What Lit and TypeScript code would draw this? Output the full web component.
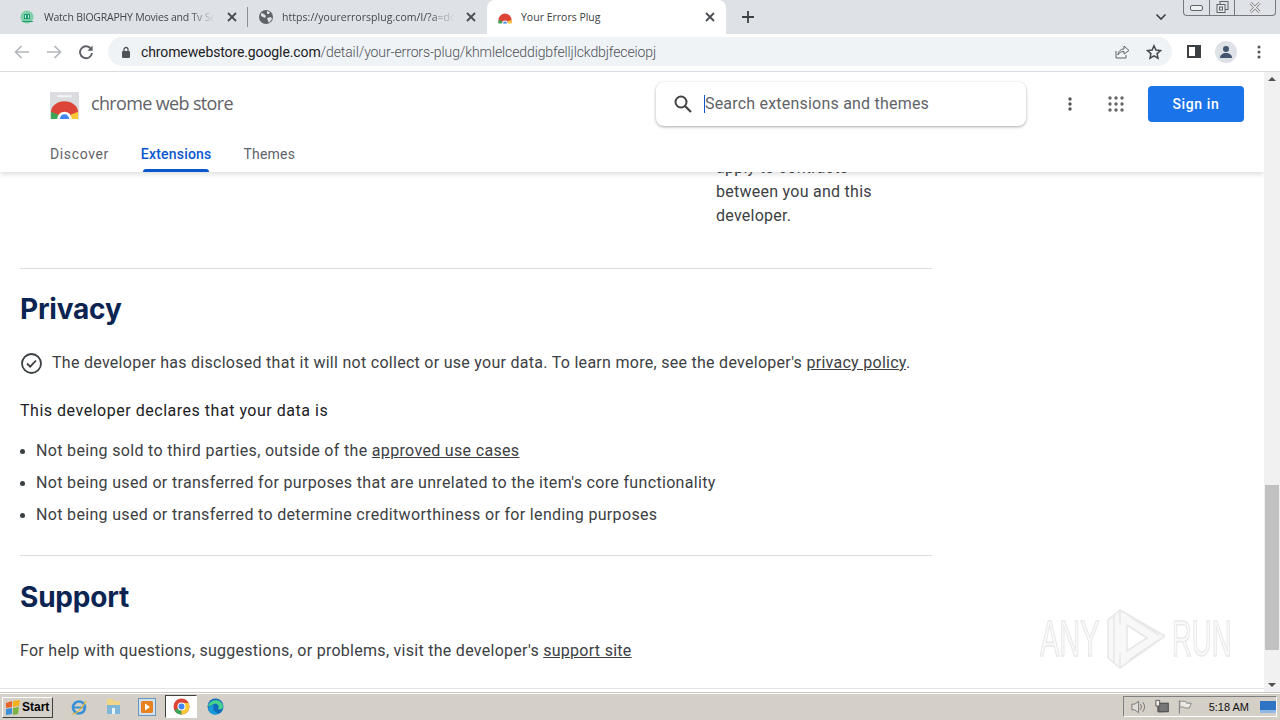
import { LitElement, html, css, svg } from "lit";
import { customElement } from "lit/decorators.js";

const closeIcon = html`<svg class="x" width="10" height="10" viewBox="0 0 10 10"><path d="M1 1l8 8M9 1l-8 8" stroke="#4a4d52" stroke-width="1.8" fill="none"/></svg>`;
const rainbow = (s: number) => html`<svg width="${s}" height="${s}" viewBox="0 0 28 28">
  <path d="M1 26v-6a13 13 0 0 1 26 0v6z" fill="#db4437"/>
  <path d="M1 20v7h7v-5z" fill="#3aa757"/><path d="M27 20v7h-7v-5z" fill="#fcc934"/>
  <path d="M8 27a6 6 0 0 1 12 0z" fill="#fff"/><path d="M10 27a4 4 0 0 1 8 0z" fill="#4285f4"/></svg>`;

@customElement("app-root")
export class AppRoot extends LitElement {
  static styles = css`
    :host { display: flex; flex-direction: column; width: 1280px; height: 720px; overflow: hidden; background: #fff; font-family: Roboto, sans-serif; color: #3c4043; }
    a { color: inherit; text-decoration: underline; }

    .tabs { height: 34px; flex: none; background: #dee1e6; display: flex; align-items: center; padding-left: 8px; position: relative; }
    .tab { width: 239px; height: 34px; box-sizing: border-box; display: flex; align-items: center; padding: 0 12px 0 11px; gap: 9px; font: 10.5px "Open Sans", sans-serif; color: #45474b; flex: none; }
    .tab .title { flex: 1; white-space: nowrap; overflow: hidden; margin-right: -5px; letter-spacing: -.22px; -webkit-mask-image: linear-gradient(90deg, #000 84%, transparent 98%); mask-image: linear-gradient(90deg, #000 84%, transparent 98%); }
    .tab .x { margin-left: 5px; }
    .tab.sep { border-right: 1px solid #8b8e93; height: 20px; width: 240px; padding: 0 10px 0 11px; }
    .tab.t2 { padding-left: 10px; padding-right: 11px; gap: 8px; }
    .tab.t2 .title { letter-spacing: .05px; }
    .tab.active { background: #fff; border-radius: 8px 8px 0 0; padding: 0 11px 0 11px; color: #3c4043; }
    .tab.active .title { -webkit-mask-image: none; mask-image: none; letter-spacing: 0; }
    .plus { margin-left: 14px; width: 16px; height: 16px; }
    .chev { margin-left: auto; margin-right: 113px; }
    .winctl { position: absolute; right: 4px; top: 0; width: 93px; height: 16px; box-sizing: border-box; border: 1px solid #75787c; border-top: none; border-radius: 0 0 4px 4px; display: flex; background: #dfe2e7; }
    .winctl > div { display: flex; align-items: center; justify-content: center; border-right: 1px solid #75787c; }
    .winctl > div:nth-child(1) { width: 25px; } .winctl > div:nth-child(2) { width: 24px; } .winctl > div:nth-child(3) { flex: 1; border: none; }

    .toolbar { height: 38px; flex: none; box-sizing: border-box; border-bottom: 1px solid #d9dbde; display: flex; align-items: center; padding: 0 0 2px 13px; background: #fff; }
    .nav { display: flex; gap: 14px; align-items: center; margin-right: 14px; }
    .reload { margin-left: 1px; }
    .omni { width: 1064px; height: 29px; border-radius: 15px; background: #f0f3f6; display: flex; align-items: center; padding-left: 13px; box-sizing: border-box; }
    .url { margin-left: 10px; font: 300 14px Roboto, sans-serif; color: #4d5157; white-space: nowrap; letter-spacing: -.11px; }
    .url b { font-weight: 400; color: #202124; }
    .omni-end { margin-left: auto; display: flex; gap: 16px; padding-right: 10px; align-items: center; }
    .tb-right { display: flex; align-items: center; margin-left: 15px; gap: 14px; }
    .avatar { width: 22px; height: 22px; border-radius: 50%; background: #dee1e6; display: flex; align-items: center; justify-content: center; overflow: hidden; }
    .dots { margin-left: 6px; }

    .view { flex: 1; display: flex; min-height: 0; }
    .page { flex: 1; position: relative; overflow: hidden; background: #fff; }
    .content { padding: 84px 0 0 20px; width: 912px; font-size: 16px; line-height: 24px; color: #3c4043; letter-spacing: .33px; }
    .side { margin-left: 696px; width: 190px; margin-bottom: 40px; letter-spacing: .26px; }
    hr { border: none; border-top: 1px solid #dadce0; margin: 0; }
    h2 { margin: 0; font: 700 28px/36px Inter, sans-serif; color: #0b2452; letter-spacing: -.2px; }
    .privacy h2 { padding-top: 22px; }
    .check { display: flex; align-items: center; gap: 9px; margin-top: 24px; white-space: nowrap; letter-spacing: .28px; }
    .declares { margin: 24px 0 0; color: #202124; letter-spacing: .52px; }
    ul { list-style: none; margin: 12px 0 0; padding: 0 0 0 16px; white-space: nowrap; }
    li { height: 32px; line-height: 32px; position: relative; }
    li::before { content: ""; position: absolute; left: -16px; top: 14px; width: 5px; height: 5px; border-radius: 50%; background: #3c4043; }
    .support { margin-top: 24px; }
    .support h2 { padding-top: 23px; }
    .support p { margin: 24px 0 0; white-space: nowrap; letter-spacing: .28px; }
    .endrule { position: absolute; left: 0; right: 0; bottom: 3px; border-top: 1px solid #e3e3e3; }

    .hdr { position: absolute; left: 0; top: 0; right: 0; height: 100px; background: #fff; box-shadow: 0 2px 5px rgba(60,64,67,.18); }
    .hdr-top { display: flex; align-items: center; height: 64px; padding: 0 20px 0 50px; }
    .logo { margin-top: 2px; }
    .brand { margin: 0 0 2px 12px; font: 400 18px "Open Sans", sans-serif; color: #5f6368; letter-spacing: -.65px; }
    .search { margin-left: 423px; width: 370px; height: 44px; border-radius: 8px; background: #fff; box-shadow: 0 1px 3px rgba(60,64,67,.45); display: flex; align-items: center; padding-left: 17px; box-sizing: border-box; }
    .caret { width: 1px; height: 18px; background: #0b57d0; margin-left: 11px; }
    .ph { font-size: 16px; color: #5f6368; letter-spacing: .21px; margin-bottom: 1px; }
    .kebab { margin-left: 42px; }
    .apps { margin-left: 36px; }
    .signin { margin-left: 24px; width: 96px; height: 36px; border: none; border-radius: 4px; background: #1a73e8; color: #fff; font: 500 14px Roboto, sans-serif; letter-spacing: .6px; }
    .hdr-nav { display: flex; padding-left: 50px; gap: 32px; font-size: 14px; color: #5f6368; height: 36px; }
    .hdr-nav span { position: relative; line-height: 36px; letter-spacing: .2px; }
    .hdr-nav span:first-child { letter-spacing: .62px; }
    .hdr-nav .on { color: #0b57d0; font-weight: 500; letter-spacing: .2px; }
    .hdr-nav .on::after { content: ""; position: absolute; left: 2px; right: 2px; bottom: 0; height: 3px; border-radius: 3px 3px 0 0; background: #0b57d0; }

    .sb { width: 16px; flex: none; background: #f1f1f1; display: flex; flex-direction: column; align-items: center; justify-content: space-between; position: relative; }
    .thumb { position: absolute; top: 413px; left: 1px; width: 14px; height: 165px; background: #c1c1c1; }
    .arrow { width: 0; height: 0; border-left: 4px solid transparent; border-right: 4px solid transparent; margin: 5px 0; }
    .arrow.up { border-bottom: 4px solid #505050; } .arrow.dn { border-top: 4px solid #505050; }

    .mark { position: absolute; left: 1040px; top: 608px; display: flex; align-items: center; pointer-events: none; font: 400 50px/62px "Liberation Sans", sans-serif; color: #fafafa; -webkit-text-stroke: 1.6px #e9e9e9; filter: blur(.4px); }
    .mark span { display: block; width: 62px; white-space: nowrap; transform-origin: left center; }
    .mark .any { transform: scaleX(.58); }
    .mark .run { transform: scaleX(.55); margin-left: 7px; }
    .mark svg { margin-left: 5px; }

    .taskbar { height: 28px; flex: none; box-sizing: border-box; background: #d4d0c8; border-top: 1px solid #c9c7c1; box-shadow: inset 0 1px 0 #fff; display: flex; align-items: center; padding-left: 2px; }
    .start { width: 51px; height: 21px; box-sizing: border-box; border: 1px solid; border-color: #fff #404040 #404040 #fff; background: #d4d0c8; display: flex; align-items: center; gap: 1px; padding-left: 2px; font: 700 12px "Liberation Sans", sans-serif; color: #000; margin-top: 1px; }
    .ql { display: flex; align-items: center; margin-left: 9px; gap: 0; }
    .ql > div { width: 34px; height: 23px; display: flex; align-items: center; justify-content: center; }
    .ql .cur { background: #fff; box-sizing: border-box; border: 1px solid; border-color: #404040 #fff #fff #404040; width: 32px; margin: 0 1px; }
    .tray { margin-left: auto; margin-right: 3px; width: 154px; height: 21px; box-sizing: border-box; border: 1px solid; border-color: #808080 #fff #fff #808080; display: flex; align-items: center; padding-left: 6px; font: 400 11px "Liberation Sans", sans-serif; color: #111; white-space: nowrap; }
    .net { margin-left: 6px; } .flag { margin-left: 8px; }
    .time { margin-left: 16px; flex: none; }
    .desk { margin-left: 11px; flex: none; }
  `;

  render() {
    return html`
      <div class="tabs">
        <div class="tab sep">
          <svg width="16" height="16" viewBox="0 0 16 16"><circle cx="8" cy="8" r="6.5" fill="#7fd0a8"/><path d="M4 12h9l2 1H2zM5 5h6v5H5z" fill="#1d9a72"/><path d="M6 6h1v3H6zM9 6h1v3H9z" fill="#c9efe0"/></svg>
          <span class="title">Watch BIOGRAPHY Movies and Tv Se</span>${closeIcon}
        </div>
        <div class="tab t2">
          <svg width="16" height="16" viewBox="0 0 16 16"><circle cx="8" cy="8" r="7" fill="#5f6368"/><path d="M3 4l3 1 2 2-1 2-2-1-2-1zM9 2l3 1-1 2-2 0zM9 9l4-1 1 2-3 4-1-2z" fill="#dee1e6"/></svg>
          <span class="title">https://yourerrorsplug.com/l/?a=do</span>${closeIcon}
        </div>
        <div class="tab active">${rainbow(14)}<span class="title">Your Errors Plug</span>${closeIcon}</div>
        <svg class="plus" viewBox="0 0 16 16"><path d="M8 2v12M2 8h12" stroke="#3c4043" stroke-width="1.8"/></svg>
        <svg class="chev" width="12" height="8" viewBox="0 0 12 8"><path d="M1.5 1.5L6 6l4.5-4.5" stroke="#3c4043" stroke-width="1.6" fill="none"/></svg>
        <div class="winctl">
          <div><svg width="13" height="6"><rect x=".5" y=".5" width="12" height="5" rx="1.5" fill="#eef0f2" stroke="#5f6368"/></svg></div>
          <div><svg width="13" height="13" viewBox="0 0 13 13"><rect x="4" y=".5" width="8" height="8" fill="none" stroke="#5f6368"/><rect x="1" y="3.5" width="8" height="8" fill="#e6e8ec" stroke="#5f6368"/><rect x="3.5" y="6" width="3" height="3" fill="none" stroke="#5f6368"/></svg></div>
          <div><svg width="12" height="11" viewBox="0 0 12 11"><path d="M1.5 1l9 9M10.5 1l-9 9" stroke="#777" stroke-width="2.6"/><path d="M1.5 1l9 9M10.5 1l-9 9" stroke="#f3f3f3" stroke-width="1.2"/></svg></div>
        </div>
      </div>

      <div class="toolbar">
        <div class="nav">
          <svg width="18" height="16" viewBox="0 0 18 16"><path d="M16 8H3M8.500 2L2.500 8l6 6" stroke="#b4b7bb" stroke-width="1.7" fill="none"/></svg>
          <svg width="18" height="16" viewBox="0 0 18 16"><path d="M2 8h13M9.500 2l6 6-6 6" stroke="#b4b7bb" stroke-width="1.7" fill="none"/></svg>
          <svg class="reload" width="16" height="16" viewBox="0 0 16 16"><path d="M13.200 5.200A6 6 0 1 0 14 9" stroke="#5f6368" stroke-width="1.9" fill="none"/><path d="M14.600 1.500v5.200H9.400z" fill="#5f6368"/></svg>
        </div>
        <div class="omni">
          <svg width="10" height="12" viewBox="0 0 10 12"><rect x="1" y="5" width="8" height="7" rx="1" fill="#50545a"/><path d="M3 5V3.500a2 2 0 0 1 4 0V5" stroke="#50545a" stroke-width="1.3" fill="none"/></svg>
          <span class="url"><b>chromewebstore.google.com</b>/detail/your-errors-plug/khmlelceddigbfelljlckdbjfeceiopj</span>
          <div class="omni-end">
            <svg width="16" height="16" viewBox="0 0 16 16"><path d="M2 7v7h10v-3" stroke="#5f6368" fill="none"/><path d="M4 11c0-4 3-6 6-6V2l5 4.500L10 10V7.500c-3 0-5 1-6 3.500z" fill="#f0f3f6" stroke="#5f6368"/></svg>
            <svg width="16" height="16" viewBox="0 0 16 16"><path d="M8 1.800l1.900 4.200 4.600.5-3.400 3.100.9 4.600L8 11.900l-4 2.300.9-4.600L1.500 6.500l4.600-.5z" fill="none" stroke="#44474b" stroke-width="1.5"/></svg>
          </div>
        </div>
        <div class="tb-right">
          <svg width="14" height="13" viewBox="0 0 14 13"><rect x="1" y="1" width="12" height="11" fill="#fff" stroke="#3c4043" stroke-width="2"/><rect x="8" y="1" width="5" height="11" fill="#3c4043"/></svg>
          <div class="avatar"><svg width="14" height="14" viewBox="0 0 14 14"><circle cx="7" cy="4" r="3" fill="#44546f"/><path d="M1 13c0-3.500 3-5 6-5s6 1.500 6 5z" fill="#44546f"/></svg></div>
          <svg class="dots" width="4" height="14" viewBox="0 0 4 14"><circle cx="2" cy="2" r="1.500" fill="#50545a"/><circle cx="2" cy="7" r="1.500" fill="#50545a"/><circle cx="2" cy="12" r="1.500" fill="#50545a"/></svg>
        </div>
      </div>

      <div class="view">
        <div class="page">
          <div class="content">
            <div class="side">apply to contracts between you and this developer.</div>
            <hr />
            <section class="privacy">
              <h2>Privacy</h2>
              <div class="check">
                <svg width="23" height="23" viewBox="0 0 23 23"><circle cx="11.500" cy="11.500" r="9.500" fill="none" stroke="#3c4043" stroke-width="1.800"/><path d="M7 11.500l3.200 3.200L16 8.500" fill="none" stroke="#3c4043" stroke-width="1.800"/></svg>
                <span>The developer has disclosed that it will not collect or use your data. To learn more, see the developer's <a>privacy policy</a>.</span>
              </div>
              <p class="declares">This developer declares that your data is</p>
              <ul>
                <li>Not being sold to third parties, outside of the <a>approved use cases</a></li>
                <li>Not being used or transferred for purposes that are unrelated to the item's core functionality</li>
                <li>Not being used or transferred to determine creditworthiness or for lending purposes</li>
              </ul>
            </section>
            <section class="support">
              <hr />
              <h2>Support</h2>
              <p>For help with questions, suggestions, or problems, visit the developer's <a>support site</a></p>
            </section>
          </div>
          <div class="endrule"></div>
          <div class="hdr">
            <div class="hdr-top">
              <svg class="logo" width="29" height="27" viewBox="0 0 28 26"><rect width="28" height="26" fill="#dadce0"/><rect x="7" y="3" width="14" height="2" fill="#f1f3f4"/>${svg`<path d="M1 26v-7a13 10 0 0 1 26 0v7z" fill="#db4437"/><path d="M1 19v7h7v-4z" fill="#3aa757"/><path d="M27 19v7h-7v-4z" fill="#fcc934"/><path d="M7 26a7 7 0 0 1 14 0z" fill="#fff"/><path d="M9.500 26a4.500 4.500 0 0 1 9 0z" fill="#4285f4"/>`}</svg>
              <span class="brand">chrome web store</span>
              <div class="search">
                <svg width="20" height="20" viewBox="0 0 20 20"><circle cx="8" cy="8" r="5.500" fill="none" stroke="#444" stroke-width="2"/><path d="M12 12l6 6" stroke="#444" stroke-width="2.200"/></svg>
                <div class="caret"></div><span class="ph">Search extensions and themes</span>
              </div>
              <svg class="kebab" width="4" height="14" viewBox="0 0 4 14"><circle cx="2" cy="2" r="1.700" fill="#555"/><circle cx="2" cy="7" r="1.700" fill="#555"/><circle cx="2" cy="12" r="1.700" fill="#555"/></svg>
              <svg class="apps" width="16" height="16" viewBox="0 0 16 16">${[2, 8, 14].flatMap((y) => [2, 8, 14].map((x) => svg`<circle cx="${x}" cy="${y}" r="1.700" fill="#666"/>`))}</svg>
              <button class="signin">Sign in</button>
            </div>
            <div class="hdr-nav"><span>Discover</span><span class="on">Extensions</span><span>Themes</span></div>
          </div>
        </div>
        <div class="sb"><div class="arrow up"></div><div class="thumb"></div><div class="arrow dn"></div></div>
        <div class="mark">
          <span class="any">ANY</span>
          <svg width="58" height="62" viewBox="0 0 58 62"><g fill="#f8f8f8" stroke="#e8e8e8" stroke-width="1.600" stroke-linejoin="round"><path fill-rule="evenodd" d="M13 2L58 28 13 60 1 50V12zM20 17V43L40 30z"/><path fill="none" d="M7 7V55M13 2V17M13 45V60M22 8L52 27M22 52L52 32"/></g></svg>
          <span class="run">RUN</span>
        </div>
      </div>

      <div class="taskbar">
        <div class="start">
          <svg width="16" height="15" viewBox="0 0 16 15"><path d="M1 3l6-2v6l-6 1z" fill="#e8622a"/><path d="M8 1l7-1-1 6-6 1z" fill="#f2b01e"/><path d="M1 9l6-1v6l-6 1z" fill="#3b8fd6"/><path d="M8 8l6-1-1 7-5 1z" fill="#7cb342"/></svg>
          Start
        </div>
        <div class="ql">
          <div><svg width="18" height="18" viewBox="0 0 18 18"><circle cx="9" cy="9.500" r="6" fill="none" stroke="#3b8fd6" stroke-width="2.600"/><path d="M3 9.500h12" stroke="#3b8fd6" stroke-width="2"/><path d="M2 16c3 1 10-5 14-13" stroke="#e2b93b" stroke-width="1.300" fill="none"/></svg></div>
          <div><svg width="17" height="17" viewBox="0 0 17 17"><path d="M2 1h6l1 2h6v13H2z" fill="#f0d68a"/><path d="M2 7h13v9H2z" fill="#7fb6d8"/><rect x="7" y="10" width="3" height="6" fill="#e8f2f8"/></svg></div>
          <div><svg width="18" height="18" viewBox="0 0 18 18"><rect x=".5" y=".5" width="17" height="17" fill="#cfe0f0" stroke="#6f94ba"/><rect x="3" y="3" width="12" height="12" rx="1.500" fill="#e8821e"/><path d="M7 5.500l5 3.500-5 3.500z" fill="#fff"/></svg></div>
          <div class="cur"><svg width="17" height="17" viewBox="0 0 17 17"><circle cx="8.500" cy="8.500" r="8" fill="#db4437"/><path d="M8.500 8.500L1.500 12.500a8 8 0 0 0 7 4z" fill="#3aa757"/><path d="M8.500 5h7a8 8 0 0 1-7 11.500z" fill="#fcc934"/><circle cx="8.500" cy="8.500" r="4" fill="#fff"/><circle cx="8.500" cy="8.500" r="3" fill="#4285f4"/></svg></div>
          <div><svg width="17" height="17" viewBox="0 0 17 17"><circle cx="8.500" cy="8.500" r="8" fill="#0f6cbd"/><path d="M1 8c2-7 13-8 15 0 .5 3-3 4-5 3 2-3-1-6-4-5-3 1-5 3-6 2z" fill="#47d18c"/><path d="M7 7c-2 3 0 8 5 8.500-4 2.500-10 .5-11-5 1-2 3-3 6-3.500z" fill="#1a9bd7"/></svg></div>
        </div>
        <div class="tray">
          <svg width="18" height="16" viewBox="0 0 18 16"><path d="M2 5h3l4-3v12l-4-3H2z" fill="#e0ded8" stroke="#777"/><path d="M11 5q2 3 0 6M13.500 3q3.500 5 0 10" fill="none" stroke="#777"/></svg>
          <svg class="net" width="17" height="16" viewBox="0 0 17 16"><rect x="6" y="4" width="10" height="9" fill="#777" stroke="#444"/><path d="M3 1h4v6H3z" fill="#f0eee8" stroke="#555"/><path d="M5 7v6h6" stroke="#555" fill="none"/></svg>
          <svg class="flag" width="16" height="16" viewBox="0 0 16 16"><path d="M2.500 1v14" stroke="#777"/><path d="M3 2h6l1 2h5l-2 5H8L7 8H3z" fill="#ece9e2" stroke="#888"/></svg>
          <span class="time">5:18 AM</span>
          <svg class="desk" width="16" height="12" viewBox="0 0 16 12"><rect width="16" height="12" fill="#2f74c4"/><rect y="9" width="16" height="3" fill="#8fb9e4"/></svg>
        </div>
      </div>
    `;
  }
}
